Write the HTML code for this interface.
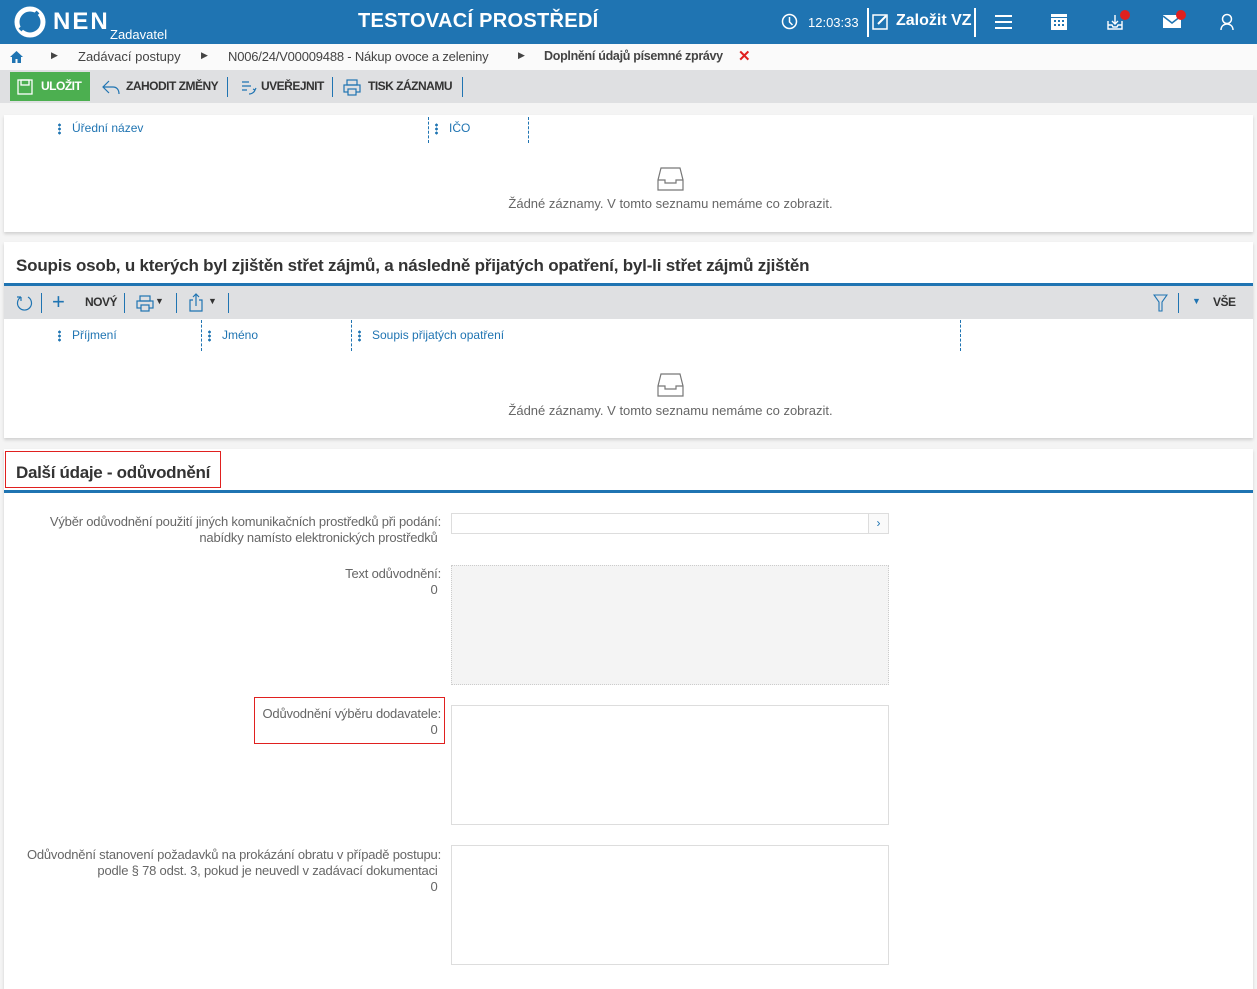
<!DOCTYPE html>
<html><head><meta charset="utf-8"><style>
*{box-sizing:border-box;margin:0;padding:0}
body{width:1257px;height:985px;overflow:hidden;background:#f4f4f4;font-family:"Liberation Sans",sans-serif;position:relative;color:#333}
.a{position:absolute}
.hdr{left:0;top:0;width:1257px;height:44px;background:#1f74b2;color:#fff}
.bc{left:0;top:44px;width:1257px;height:26px;background:#fafafa;font-size:13px;color:#444}
.tb{left:0;top:70px;width:1257px;height:33px;background:#dfe0e2}
.card{background:#fff;box-shadow:0 2px 3px rgba(0,0,0,.15)}
.col{font-size:12px;color:#1f74b2}
.dots{display:inline-block;width:3px;height:12px;background:radial-gradient(circle,#1f74b2 1.3px,transparent 1.5px) 0 0/3px 4px repeat-y;vertical-align:middle;margin-right:11px}
.vl{border-left:1px dashed #1f74b2;width:0}
.empty{font-size:13px;color:#666;text-align:center}
.lbl{font-size:13px;color:#666;text-align:right;line-height:16px;letter-spacing:-.2px}
.sep{width:1px;height:20px;background:#1f74b2}
.tbt{font-size:12px;font-weight:bold;color:#333;letter-spacing:-.5px}
</style></head><body>
<div class="a hdr">
 <svg class="a" style="left:14px;top:6px" width="32" height="32" viewBox="0 0 32 32"><circle cx="16" cy="16" r="13" fill="none" stroke="#fff" stroke-width="5"/><path d="M6 24 L24 6" stroke="#1f74b2" stroke-width="4"/></svg>
 <div class="a" style="left:53px;top:8px;font-size:24px;font-weight:bold;letter-spacing:2px">NEN</div>
 <div class="a" style="left:110px;top:27px;font-size:13px">Zadavatel</div>
 <div class="a" style="left:358px;top:10px;font-size:20px;font-weight:bold;letter-spacing:.3px">TESTOVACÍ PROSTŘEDÍ</div>
 <svg class="a" style="left:781px;top:13px" width="17" height="17"><circle cx="8.5" cy="8.5" r="7" fill="none" stroke="#fff" stroke-width="1.5"/><path d="M8.5 4v5l3 3" stroke="#fff" stroke-width="1.5" fill="none"/></svg>
 <div class="a" style="left:808px;top:15px;font-size:13px">12:03:33</div>
 <div class="a" style="left:867px;top:8px;width:2px;height:29px;background:#fff"></div>
 <svg class="a" style="left:872px;top:13px" width="17" height="17"><rect x="1" y="2" width="14" height="14" fill="none" stroke="#fff" stroke-width="1.5"/><path d="M6 11l8-8" stroke="#fff" stroke-width="2"/></svg>
 <div class="a" style="left:896px;top:12px;font-size:16px;font-weight:bold">Založit VZ</div>
 <div class="a" style="left:974px;top:8px;width:2px;height:29px;background:#fff"></div>
 <div class="a" style="left:995px;top:15px;width:17px;height:2px;background:#fff;box-shadow:0 6px 0 #fff,0 12px 0 #fff"></div>
 <svg class="a" style="left:1051px;top:14px" width="16" height="16"><rect x="0" y="0" width="16" height="16" fill="#fff"/><rect x="0" y="3" width="16" height="1" fill="#1f74b2"/><g fill="#1f74b2"><rect x="3" y="6" width="2" height="2"/><rect x="7" y="6" width="2" height="2"/><rect x="11" y="6" width="2" height="2"/><rect x="3" y="10" width="2" height="2"/><rect x="7" y="10" width="2" height="2"/><rect x="11" y="10" width="2" height="2"/></g></svg>
 <svg class="a" style="left:1106px;top:13px" width="18" height="18"><path d="M2 8v8h14V8M9 2v9M6 8l3 3 3-3M2 12h4l1 2h4l1-2h4" fill="none" stroke="#fff" stroke-width="1.4"/></svg>
 <div class="a" style="left:1120px;top:10px;width:10px;height:10px;border-radius:50%;background:#e0201f"></div>
 <svg class="a" style="left:1163px;top:15px" width="18" height="14"><rect width="18" height="13" fill="#fff"/><path d="M0 1l9 7 9-7" stroke="#1f74b2" stroke-width="1.5" fill="none"/></svg>
 <div class="a" style="left:1176px;top:10px;width:10px;height:10px;border-radius:50%;background:#e0201f"></div>
 <svg class="a" style="left:1219px;top:13px" width="16" height="18"><circle cx="8" cy="6" r="4.5" fill="none" stroke="#fff" stroke-width="1.5"/><path d="M2 17c0-4 3-6 6-6s6 2 6 6" fill="none" stroke="#fff" stroke-width="1.5"/></svg>
</div>
<div class="a bc">
 <svg class="a" style="left:10px;top:7px" width="13" height="12"><path d="M6.5 0L0 6h2v6h3.5V8h2v4H11V6h2z" fill="#1f74b2"/></svg>
 <div class="a" style="left:51px;top:6px;font-size:9px">▶</div>
 <div class="a" style="left:78px;top:5px">Zadávací postupy</div>
 <div class="a" style="left:201px;top:6px;font-size:9px">▶</div>
 <div class="a" style="left:228px;top:5px;letter-spacing:-.2px">N006/24/V00009488 - Nákup ovoce a zeleniny</div>
 <div class="a" style="left:518px;top:6px;font-size:9px">▶</div>
 <div class="a" style="left:544px;top:5px;font-weight:bold;font-size:12.5px;letter-spacing:-.3px">Doplnění údajů písemné zprávy</div>
 <div class="a" style="left:738px;top:3px;color:#e0201f;font-weight:bold;font-size:15px">✕</div>
</div>
<div class="a tb">
 <div class="a" style="left:10px;top:2px;width:80px;height:29px;background:#4caf50"></div>
 <svg class="a" style="left:17px;top:9px" width="16" height="16"><rect x="1" y="1" width="14" height="14" fill="none" stroke="#fff" stroke-width="1.3"/><rect x="4" y="1" width="8" height="5" fill="none" stroke="#fff" stroke-width="1.3"/></svg>
 <div class="a tbt" style="left:41px;top:9px;color:#fff">ULOŽIT</div>
 <svg class="a" style="left:102px;top:9px" width="18" height="16"><path d="M7 2L1 8l6 6M1 8h10c4 0 6 3 6 7" fill="none" stroke="#1f74b2" stroke-width="1.2"/></svg>
 <div class="a tbt" style="left:126px;top:9px">ZAHODIT ZMĚNY</div>
 <div class="a sep" style="left:227px;top:7px"></div>
 <svg class="a" style="left:241px;top:10px" width="16" height="16"><path d="M1 2h7M1 6h9M1 10h5M8 14c2 0 5-1 6-4M12 9l2 1 1-2" fill="none" stroke="#1f74b2" stroke-width="1.2"/></svg>
 <div class="a tbt" style="left:261px;top:9px">UVEŘEJNIT</div>
 <div class="a sep" style="left:332px;top:7px"></div>
 <svg class="a" style="left:343px;top:9px" width="18" height="17"><rect x="4" y="1" width="10" height="5" fill="none" stroke="#1f74b2" stroke-width="1.2"/><rect x="1" y="6" width="16" height="7" fill="none" stroke="#1f74b2" stroke-width="1.2"/><rect x="5" y="10" width="8" height="6" fill="#dfe0e2" stroke="#1f74b2" stroke-width="1.2"/></svg>
 <div class="a tbt" style="left:368px;top:9px">TISK ZÁZNAMU</div>
 <div class="a sep" style="left:462px;top:7px"></div>
</div>
<!-- card 1 -->
<div class="a card" style="left:4px;top:115px;width:1249px;height:117px">
 <div class="a col" style="left:54px;top:6px"><span class="dots"></span>Úřední název</div>
 <div class="a vl" style="left:424px;top:2px;height:26px"></div>
 <div class="a col" style="left:431px;top:6px"><span class="dots"></span>IČO</div>
 <div class="a vl" style="left:524px;top:2px;height:26px"></div>
 <svg class="a" style="left:653px;top:52px" width="27" height="24"><path d="M4 1h19l3 12v10H1V13zM1 13h7v3h11v-3h7" fill="none" stroke="#777" stroke-width="1.2"/></svg>
 <div class="a empty" style="left:0;width:1333px;top:81px">Žádné záznamy. V tomto seznamu nemáme co zobrazit.</div>
</div>
<!-- card 2 -->
<div class="a card" style="left:4px;top:242px;width:1249px;height:196px">
 <div class="a" style="left:12px;top:14px;font-size:17px;font-weight:bold;color:#333;letter-spacing:-.2px">Soupis osob, u kterých byl zjištěn střet zájmů, a následně přijatých opatření, byl-li střet zájmů zjištěn</div>
 <div class="a" style="left:0;top:41px;width:1249px;height:3px;background:#1f74b2"></div>
 <div class="a" style="left:0;top:44px;width:1249px;height:33px;background:#dfe0e2">
  <svg class="a" style="left:12px;top:8px" width="18" height="18"><path d="M12 3A7 7 0 1 1 5 3M5 3V7M5 3H1" fill="none" stroke="#1f74b2" stroke-width="1.2"/></svg>
  <div class="a sep" style="left:37px;top:7px"></div>
  <div class="a" style="left:48px;top:3px;font-size:22px;color:#1f74b2;font-weight:300">+</div>
  <div class="a tbt" style="left:81px;top:9px">NOVÝ</div>
  <div class="a sep" style="left:120px;top:7px"></div>
  <svg class="a" style="left:132px;top:9px" width="18" height="17"><rect x="4" y="1" width="10" height="5" fill="none" stroke="#1f74b2" stroke-width="1.2"/><rect x="1" y="6" width="16" height="7" fill="none" stroke="#1f74b2" stroke-width="1.2"/><rect x="5" y="10" width="8" height="6" fill="#dfe0e2" stroke="#1f74b2" stroke-width="1.2"/></svg>
  <div class="a" style="left:151px;top:10px;font-size:9px">▼</div>
  <div class="a sep" style="left:172px;top:7px"></div>
  <svg class="a" style="left:185px;top:7px" width="14" height="19"><path d="M4 7H1v11h12V7h-3M7 13V1M4 4l3-3 3 3" fill="none" stroke="#1f74b2" stroke-width="1.2"/></svg>
  <div class="a" style="left:204px;top:10px;font-size:9px">▼</div>
  <div class="a sep" style="left:224px;top:7px"></div>
  <svg class="a" style="left:1149px;top:8px" width="15" height="18"><path d="M1 1h13L9 8v9H6V8z" fill="none" stroke="#1f74b2" stroke-width="1.1"/></svg>
  <div class="a sep" style="left:1174px;top:7px"></div>
  <div class="a" style="left:1188px;top:10px;font-size:9px;color:#1f74b2">▼</div>
  <div class="a tbt" style="left:1209px;top:9px">VŠE</div>
 </div>
 <div class="a col" style="left:54px;top:86px"><span class="dots"></span>Příjmení</div>
 <div class="a vl" style="left:197px;top:78px;height:31px"></div>
 <div class="a col" style="left:204px;top:86px"><span class="dots"></span>Jméno</div>
 <div class="a vl" style="left:347px;top:78px;height:31px"></div>
 <div class="a col" style="left:354px;top:86px"><span class="dots"></span>Soupis přijatých opatření</div>
 <div class="a vl" style="left:956px;top:78px;height:31px"></div>
 <svg class="a" style="left:653px;top:131px" width="27" height="24"><path d="M4 1h19l3 12v10H1V13zM1 13h7v3h11v-3h7" fill="none" stroke="#777" stroke-width="1.2"/></svg>
 <div class="a empty" style="left:0;width:1333px;top:161px">Žádné záznamy. V tomto seznamu nemáme co zobrazit.</div>
</div>
<!-- card 3 -->
<div class="a card" style="left:4px;top:449px;width:1249px;height:540px">
 <div class="a" style="left:1px;top:2px;width:216px;height:37px;border:1px solid #e0201f"></div>
 <div class="a" style="left:12px;top:14px;font-size:17px;font-weight:bold;color:#333;letter-spacing:-.3px">Další údaje - odůvodnění</div>
 <div class="a" style="left:0;top:41px;width:1249px;height:3px;background:#1f74b2"></div>
 <div class="a lbl" style="left:0;width:437px;top:65px">Výběr odůvodnění použití jiných komunikačních prostředků při podání:<br>nabídky namísto elektronických prostředků&nbsp;</div>
 <div class="a" style="left:447px;top:64px;width:438px;height:21px;border:1px solid #ddd"></div>
 <div class="a" style="left:864px;top:65px;width:20px;height:19px;border-left:1px solid #ddd;background:#fafafa;color:#1f74b2;font-size:12px;text-align:center;line-height:18px">›</div>
 <div class="a lbl" style="left:0;width:437px;top:117px">Text odůvodnění:<br>0&nbsp;</div>
 <div class="a" style="left:447px;top:116px;width:438px;height:120px;border:1px dotted #ccc;background:#f4f4f4"></div>
 <div class="a" style="left:250px;top:248px;width:191px;height:47px;border:1px solid #e0201f"></div>
 <div class="a lbl" style="left:0;width:437px;top:257px">Odůvodnění výběru dodavatele:<br>0&nbsp;</div>
 <div class="a" style="left:447px;top:256px;width:438px;height:120px;border:1px solid #ddd"></div>
 <div class="a lbl" style="left:0;width:437px;top:398px">Odůvodnění stanovení požadavků na prokázání obratu v případě postupu:<br>podle § 78 odst. 3, pokud je neuvedl v zadávací dokumentaci&nbsp;<br>0&nbsp;</div>
 <div class="a" style="left:447px;top:396px;width:438px;height:120px;border:1px solid #ddd"></div>
</div>
</body></html>
